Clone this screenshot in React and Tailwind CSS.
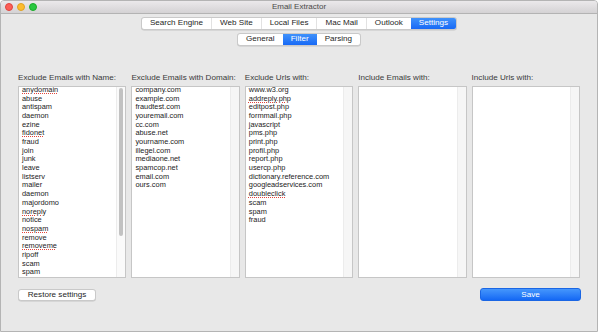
const topTabs = ["Search Engine", "Web Site", "Local Files", "Mac Mail", "Outlook", "Settings"];
const subTabs = ["General", "Filter", "Parsing"];

// "*" marks a word the spell checker underlines
const columns = [
  {
    label: "Exclude Emails with Name:",
    scroll: true,
    items: ["*anydomain", "abuse", "antispam", "daemon", "ezine", "*fidonet", "fraud", "join", "junk", "leave", "listserv", "mailer", "daemon", "majordomo", "*noreply", "notice", "*nospam", "remove", "*removeme", "ripoff", "scam", "spam"],
  },
  {
    label: "Exclude Emails with Domain:",
    items: ["company.com", "example.com", "fraudtest.com", "youremail.com", "cc.com", "abuse.net", "yourname.com", "illegel.com", "mediaone.net", "spamcop.net", "email.com", "ours.com"],
  },
  {
    label: "Exclude Urls with:",
    items: ["www.w3.org", "*addreply.php", "editpost.php", "formmail.php", "javascript", "pms.php", "print.php", "profil.php", "report.php", "usercp.php", "dictionary.reference.com", "googleadservices.com", "*doubleclick", "scam", "spam", "fraud"],
  },
  { label: "Include Emails with:", items: [] },
  { label: "Include Urls with:", items: [] },
];

function Segmented({ tabs, active }) {
  return (
    <div className="flex h-[13px] rounded-[3px] border border-[#c9c9c9] bg-white shadow-[0_0.5px_0.5px_rgba(0,0,0,0.15)] overflow-hidden">
      {tabs.map((t, i) => (
        <div
          key={t}
          className={
            "flex items-center px-[8px] text-[8.1px] leading-none " +
            (t === active
              ? "bg-gradient-to-b from-[#3f91fb] to-[#1869f5] text-white"
              : "text-[#262626]") +
            (i > 0 && t !== active && tabs[i - 1] !== active ? " border-l border-[#e2e2e2]" : "")
          }
        >
          {t}
        </div>
      ))}
    </div>
  );
}

function ListBox({ col }) {
  return (
    <div className="flex flex-col">
      <div className="text-[8.1px] leading-none text-[#3a3a3a] mb-[4px] whitespace-nowrap">{col.label}</div>
      <div className="h-[192px] flex border border-[#c6c6c6] bg-white">
        <div className="flex-1 pl-[3px] -mt-[1px] text-[7.4px] leading-[8.67px] text-[#1b1b1b] whitespace-nowrap overflow-hidden">
          {col.items.map((it, i) =>
            it.startsWith("*") ? (
              <div key={i}>
                <span className="underline decoration-dotted decoration-[#e0443c] decoration-1 underline-offset-[0.5px]">{it.slice(1)}</span>
              </div>
            ) : (
              <div key={i}>{it}</div>
            )
          )}
        </div>
        {col.scroll ? (
          <div className="w-[9px] border-l border-[#ececec] bg-[#fafafa] flex justify-center pt-[1px]">
            <div className="w-[4px] h-[148px] rounded-full bg-[#c2c2c2]" />
          </div>
        ) : (
          <div className="w-[9px] border-l border-[#ececec] bg-[#f6f6f6] bg-[radial-gradient(#dedede_0.6px,transparent_0.7px)] bg-[length:2px_2px]" />
        )}
      </div>
    </div>
  );
}

export default function App() {
  return (
    <div className="w-[600px] h-[333px] bg-white" style={{ fontFamily: "'Liberation Sans', Arial, sans-serif" }}>
      <div className="w-[598px] h-[332px] flex flex-col bg-[#e8e8e8] border border-[#b4b4b4] rounded-t-[4px] overflow-hidden">
        {/* title bar */}
        <div className="h-[13px] grid grid-cols-[80px_1fr_80px] items-center bg-gradient-to-b from-[#ebe9eb] to-[#d4d2d4] border-b border-[#b3b3b3]">
          <div className="flex items-center gap-[4px] pl-[4px]">
            <span className="w-[8px] h-[8px] rounded-full bg-[#fc5f57] border border-[#e0443e]" />
            <span className="w-[8px] h-[8px] rounded-full bg-[#fdbc2e] border border-[#dea123]" />
            <span className="w-[8px] h-[8px] rounded-full bg-[#29c840] border border-[#1aab29]" />
          </div>
          <div className="text-center text-[8px] leading-none text-[#4a4a4a]">Email Extractor</div>
          <div />
        </div>

        <div className="flex justify-center mt-[3px]">
          <Segmented tabs={topTabs} active="Settings" />
        </div>
        <div className="flex justify-center mt-[3px]">
          <Segmented tabs={subTabs} active="Filter" />
        </div>

        <div className="grid grid-cols-5 gap-[5px] px-[17px] mt-[28px]">
          {columns.map((c) => (
            <ListBox key={c.label} col={c} />
          ))}
        </div>

        <div className="flex justify-between items-center pl-[17px] pr-[16px] mt-[10px]">
          <button className="w-[78px] h-[12px] rounded-[3px] border border-[#c9c9c9] bg-white shadow-[0_0.5px_0.5px_rgba(0,0,0,0.15)] text-[8.1px] leading-none text-[#262626]">
            Restore settings
          </button>
          <button className="w-[101px] h-[13px] rounded-[3px] border border-[#1a66e4] bg-gradient-to-b from-[#4596fc] to-[#1468f4] text-[8.1px] leading-none text-white">
            Save
          </button>
        </div>
      </div>
    </div>
  );
}
